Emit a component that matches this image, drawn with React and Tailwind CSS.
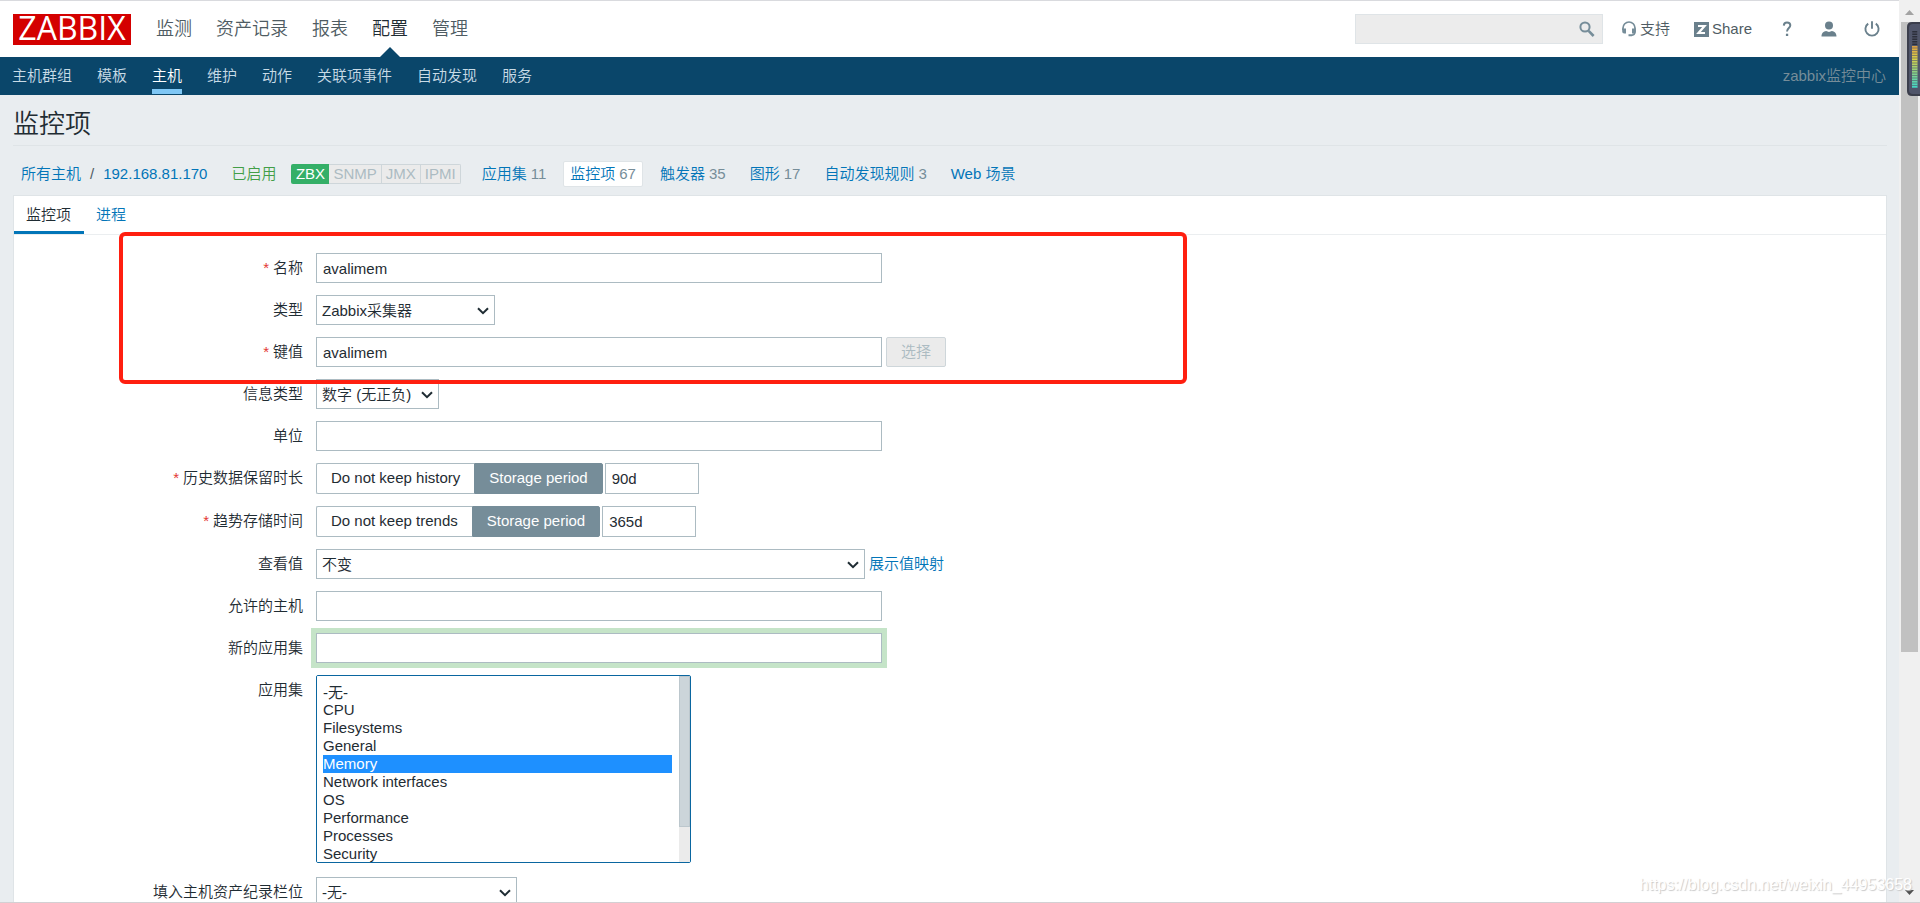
import React, { useState } from 'react';

const MENU = ['监测', '资产记录', '报表', '配置', '管理'];
const SUBMENU = ['主机群组', '模板', '主机', '维护', '动作', '关联项事件', '自动发现', '服务'];
const INTERFACES = ['SNMP', 'JMX', 'IPMI'];
const APPLICATIONS = [
  '-无-', 'CPU', 'Filesystems', 'General', 'Memory', 'Network interfaces',
  'OS', 'Performance', 'Processes', 'Security', 'Status', 'Zabbix agent',
];
const HOST_LINKS = [
  { name: '应用集', count: 11 },
  { name: '监控项', count: 67, active: true },
  { name: '触发器', count: 35 },
  { name: '图形', count: 17 },
  { name: '自动发现规则', count: 3 },
  { name: 'Web 场景' },
];

const inputClass = 'block h-[30px] border border-[#acbbc2] bg-white px-1.5 text-[#1f2c33] outline-none';

function SearchIcon() {
  return (
    <svg className="h-4 w-4" viewBox="0 0 16 16" fill="none" stroke="#768d99">
      <circle cx="6" cy="6" r="4.6" strokeWidth="2" />
      <path d="M9.6 9.8 14.6 15" strokeWidth="2.6" />
    </svg>
  );
}

function HeadsetIcon() {
  return (
    <svg className="h-4 w-4" viewBox="0 0 16 16">
      <path d="M2 9V7a6 6 0 0 1 12 0v3.500c0 2.500-1.500 3.700-4 3.800" fill="none" stroke="#768d99" strokeWidth="1.700" />
      <path d="M1.200 7.500H5v5H3.200a2 2 0 0 1-2-2zM11 7.500h3.800v3a2 2 0 0 1-2 2H11zM7.500 13.300h3v2h-3z" fill="#768d99" />
    </svg>
  );
}

function ShareIcon() {
  return (
    <svg className="h-[15px] w-[15px]" viewBox="0 0 15 15">
      <path d="M0 0h15v15H0z" fill="#6a808c" />
      <path d="M4 4h6.500L4.500 11H11" fill="none" stroke="#fff" strokeWidth="2.200" />
    </svg>
  );
}

function HelpIcon() {
  return (
    <svg className="h-4 w-4" viewBox="0 0 16 16">
      <path d="M4.800 4.600C4.900 2.600 6 1.400 8 1.400s3.300 1.200 3.300 2.900C11.300 7 8 7 8 10.600" fill="none" stroke="#6a808c" strokeWidth="2" />
      <path d="M6.900 12.700h2.300V15H6.900z" fill="#6a808c" />
    </svg>
  );
}

function UserIcon() {
  return (
    <svg className="h-4 w-4" viewBox="0 0 16 16" fill="#6a808c">
      <circle cx="8" cy="4.500" r="4" />
      <path d="M.5 15.500c0-3.500 2.200-5 4.600-5.400 1.800 1.100 4 1.100 5.800 0 2.400.4 4.600 1.900 4.600 5.400z" />
    </svg>
  );
}

function PowerIcon() {
  return (
    <svg className="h-4 w-4" viewBox="0 0 16 16" fill="none" stroke="#6a808c" strokeWidth="1.900">
      <path d="M4.200 2.600a6.600 6.600 0 1 0 7.600 0M8 .3v7.400" />
    </svg>
  );
}

function Header() {
  return (
    <header>
      <div className="flex h-[57px] items-center border-t border-[#d9dade] bg-white pl-[13px] pr-[19px]">
        <a href="#home" className="mr-[25px] flex h-[31px] w-[118px] items-center justify-center bg-[#d40000] pb-0.5 font-['Open_Sans',sans-serif] text-[32px] font-normal leading-none text-white">
          ZABBIX
        </a>
        <nav className="flex h-full gap-6 text-lg leading-[56px]">
          {MENU.map(item => (
            <a key={item} href="#menu" className={item === '配置' ? 'relative text-[#1f2c33]' : 'text-[#4f5c63]'}>
              {item}
              {item === '配置' && (
                <span className="absolute bottom-0 left-1/2 -ml-2.5 border-x-10 border-b-10 border-x-transparent border-b-[#0a466a]" />
              )}
            </a>
          ))}
        </nav>
        <form className="ml-auto flex h-[30px] w-[248px] items-center border border-[#dfe4e7] bg-[#ececec]">
          <input aria-label="search" type="text" className="h-full min-w-0 flex-1 px-1.5 outline-none" />
          <button type="button" aria-label="search" className="mr-[7px]"><SearchIcon /></button>
        </form>
        <div className="ml-[18px] flex items-center text-[#4f5c63]">
          <a href="#support" className="mr-6 flex items-center gap-[3px]"><HeadsetIcon />支持</a>
          <a href="#share" className="mr-[27px] flex items-center gap-[3px]"><ShareIcon />Share</a>
          <a href="#help" aria-label="help" className="mr-[26px]"><HelpIcon /></a>
          <a href="#profile" aria-label="profile" className="mr-[27px]"><UserIcon /></a>
          <a href="#logout" aria-label="logout"><PowerIcon /></a>
        </div>
      </div>
      <div className="flex h-[38px] items-center justify-between bg-[#0a466a] pl-3 pr-[13px]">
        <nav className="flex h-full gap-[25px] leading-[38px] text-[#c8dbe6]">
          {SUBMENU.map(item => (
            <a key={item} href="#submenu" className={item === '主机' ? 'relative text-white' : ''}>
              {item}
              {item === '主机' && <span className="absolute inset-x-0 bottom-px h-[5px] bg-[#7fc7f5]" />}
            </a>
          ))}
        </nav>
        <span className="text-[#768d99]">zabbix监控中心</span>
      </div>
    </header>
  );
}

function HostBar() {
  return (
    <nav className="flex h-[49px] items-center pl-2 pt-1.5 text-[#0275b8]">
      <a href="#hosts">所有主机</a>
      <span className="mx-[9px] text-[#4f5c63]">/</span>
      <a href="#host">192.168.81.170</a>
      <span className="ml-6 text-[#429e47]">已启用</span>
      <div className="ml-[15px] mr-3.5 flex h-5 overflow-hidden rounded-xs leading-5 text-[#acbbc2]">
        <span className="w-[38px] bg-[#34af67] text-center text-white">ZBX</span>
        {INTERFACES.map(name => (
          <span key={name} className="border-y border-r border-[#ced6da] bg-[#ebebeb] px-1 leading-[18px]">{name}</span>
        ))}
      </div>
      <div className="flex gap-2.5">
        {HOST_LINKS.map(link => (
          <a
            key={link.name}
            href="#link"
            className={`flex h-[26px] items-center gap-1 rounded-xs border px-1.5 ${link.active ? 'border-[#dfe4e7] bg-white' : 'border-transparent'}`}
          >
            {link.name}
            {link.count && <span className="text-[#768d99]">{link.count}</span>}
          </a>
        ))}
      </div>
    </nav>
  );
}

function Row({ label, htmlFor, required, children }) {
  return (
    <div className="flex items-start gap-[13px]">
      <label htmlFor={htmlFor} className="w-[289px] shrink-0 text-right leading-[29px]">
        {required && <span className="mr-1 text-[#e33734]">*</span>}
        {label}
      </label>
      <div className="flex items-center gap-1">{children}</div>
    </div>
  );
}

function Select({ id, className, value }) {
  return (
    <div className={`relative ${className}`}>
      <select id={id} className="block h-[30px] w-full appearance-none border border-[#acbbc2] bg-white pl-[5px] pt-px text-[#1f2c33] outline-none">
        <option>{value}</option>
      </select>
      <svg className="pointer-events-none absolute right-1.5 top-3 h-2 w-3" viewBox="0 0 12 8" fill="none" stroke="#1f2c33" strokeWidth="2">
        <path d="M1 1.200 6 6.200 11 1.200" />
      </svg>
    </div>
  );
}

function StorageRow({ label, name, off, defaultValue }) {
  const [keep, setKeep] = useState(true);
  const base = 'h-[31px] cursor-pointer border px-3.5 leading-7';
  const on = 'border-[#768d99] bg-[#768d99] text-white';
  const idle = 'border-[#acbbc2] bg-white';

  return (
    <Row label={label} htmlFor={name} required>
      <div className="-mr-0.5 flex">
        <label className={`${base} rounded-l-xs border-r-0 ${keep ? idle : on}`}>
          <input type="radio" name={`${name}_mode`} className="sr-only" checked={!keep} onChange={() => setKeep(false)} />
          {off}
        </label>
        <label className={`${base} rounded-r-xs ${keep ? on : idle}`}>
          <input type="radio" name={`${name}_mode`} className="sr-only" checked={keep} onChange={() => setKeep(true)} />
          Storage period
        </label>
      </div>
      <input id={name} type="text" defaultValue={defaultValue} className="block h-[31px] w-[94px] border border-[#acbbc2] px-1.5 outline-none" />
    </Row>
  );
}

function ItemForm() {
  return (
    <form className="relative flex flex-col gap-3 pt-[18px]">
      <Row label="名称" htmlFor="name" required>
        <input id="name" type="text" defaultValue="avalimem" className={`${inputClass} w-[566px]`} />
      </Row>
      <Row label="类型" htmlFor="type">
        <Select id="type" value="Zabbix采集器" className="w-[179px]" />
      </Row>
      <Row label="键值" htmlFor="key" required>
        <input id="key" type="text" defaultValue="avalimem" className={`${inputClass} w-[566px]`} />
        <button type="button" disabled className="h-[30px] w-[60px] rounded-xs border border-[#ced6da] bg-[#ebebeb] text-[#acbbc2]">选择</button>
      </Row>
      <Row label="信息类型" htmlFor="value_type">
        <Select id="value_type" value="数字 (无正负)" className="w-[123px]" />
      </Row>
      <Row label="单位" htmlFor="units">
        <input id="units" type="text" className={`${inputClass} w-[566px]`} />
      </Row>
      <StorageRow label="历史数据保留时长" name="history" off="Do not keep history" defaultValue="90d" />
      <StorageRow label="趋势存储时间" name="trends" off="Do not keep trends" defaultValue="365d" />
      <Row label="查看值" htmlFor="valuemap">
        <Select id="valuemap" value="不变" className="w-[549px]" />
        <a href="#valuemaps" className="text-[#0275b8]">展示值映射</a>
      </Row>
      <Row label="允许的主机" htmlFor="hosts">
        <input id="hosts" type="text" className={`${inputClass} w-[566px]`} />
      </Row>
      <Row label="新的应用集" htmlFor="new_application">
        <input id="new_application" type="text" className={`${inputClass} w-[566px] shadow-[0_0_0_5px_#c5e4c8]`} />
      </Row>
      <Row label="应用集" htmlFor="applications">
        <div className="relative mb-0.5">
          <select
            id="applications"
            multiple
            defaultValue={['Memory']}
            className="block h-[188px] w-[375px] overflow-y-scroll rounded-xs border border-[#0a66a0] bg-white py-[7px] pl-1.5 pr-[18px] outline-none [scrollbar-width:none]"
          >
            {APPLICATIONS.map(name => (
              <option key={name} className="flex h-[18px] min-h-0 items-center p-0 pb-0.5 checked:bg-[linear-gradient(#1e90ff,#1e90ff)] checked:text-white">
                {name}
              </option>
            ))}
          </select>
          <div className="pointer-events-none absolute inset-y-px right-px w-[11px] bg-[#ebebeb]">
            <div className="h-[81%] border border-[#bcc7cd] bg-[#ccd5da]" />
          </div>
        </div>
      </Row>
      <Row label="填入主机资产纪录栏位" htmlFor="inventory">
        <Select id="inventory" value="-无-" className="w-[201px]" />
      </Row>

      {/* highlight frame over the first rows */}
      <div className="pointer-events-none absolute -top-[3px] left-[105px] h-[152px] w-[1068px] rounded-md border-4 border-[#ff1f10]" />
    </form>
  );
}

// Page scroll bar with the volume meter overlapping it
function ScrollBar() {
  return (
    <aside className="relative flex w-[21px] shrink-0 flex-col items-center bg-[#f0f0f0]">
      <svg className="h-[22px] w-full shrink-0" viewBox="0 0 21 22"><path d="M6 15h9l-4.500-5z" fill="#a3a3a3" /></svg>
      <div className="w-[17px] flex-[630] bg-[#c1c1c1]" />
      <div className="flex-[230]" />
      <svg className="h-[21px] w-full shrink-0" viewBox="0 0 21 21"><path d="M6 8h9l-4.500 5z" fill="#505050" /></svg>
      <svg className="absolute right-0 top-[22px] h-[74px] w-[13px]" viewBox="0 0 13 74">
        <defs>
          <linearGradient id="level" x1="0" y1="0" x2="0" y2="1">
            <stop offset="0" stopColor="#e0a040" />
            <stop offset="0.300" stopColor="#d8d048" />
            <stop offset="0.600" stopColor="#90d080" />
            <stop offset="1" stopColor="#40d8c8" />
          </linearGradient>
        </defs>
        <path d="M13 0H5Q0 0 0 5v64q0 5 5 5h8z" fill="#3b3e4c" />
        <path d="M13 2H6Q2 2 2 6v62q0 4 4 4h7z" fill="#50556a" />
        <path d="M7.750 9v14" stroke="#2c2f3b" strokeWidth="5" strokeDasharray="1.500 1" />
        <path d="M5 24h5.500v42H5z" fill="url(#level)" />
        <path d="M7.750 25.500v41" stroke="#50556a" strokeOpacity="0.600" strokeWidth="5.500" strokeDasharray="1 1.500" />
      </svg>
    </aside>
  );
}

export default function App() {
  return (
    <div className="relative flex h-screen overflow-hidden bg-[#e9edf0] font-['Liberation_Sans','Noto_Sans_CJK_SC',sans-serif] text-[15px] font-[350] leading-5 text-[#1f2c33]">
      <div className="flex min-w-0 flex-1 flex-col">
        <Header />
        <main className="flex min-h-0 flex-1 flex-col pl-[13px] pr-3">
          <h1 className="h-[51px] shrink-0 border-b border-[#dfe4e7] text-[26px] leading-[58px]">监控项</h1>
          <HostBar />
          <section className="min-h-0 flex-1 overflow-hidden border-x border-t border-[#dfe4e7] bg-white">
            <div className="flex h-[39px] border-b border-[#ebeef0] leading-[38px]">
              <button type="button" className="h-[38px] border-b-3 border-[#0275b8] pl-3 pr-[13px]">监控项</button>
              <button type="button" className="px-3 text-[#0275b8]">进程</button>
            </div>
            <ItemForm />
          </section>
        </main>
      </div>
      <ScrollBar />
      <div className="pointer-events-none absolute bottom-2 right-2 text-base leading-5 text-white [text-shadow:1px_1px_1px_#c8c8c8]">
        https://blog.csdn.net/weixin_44953658
      </div>
      <div className="absolute inset-x-0 bottom-0 h-px bg-[#d3d0d3]" />
    </div>
  );
}
